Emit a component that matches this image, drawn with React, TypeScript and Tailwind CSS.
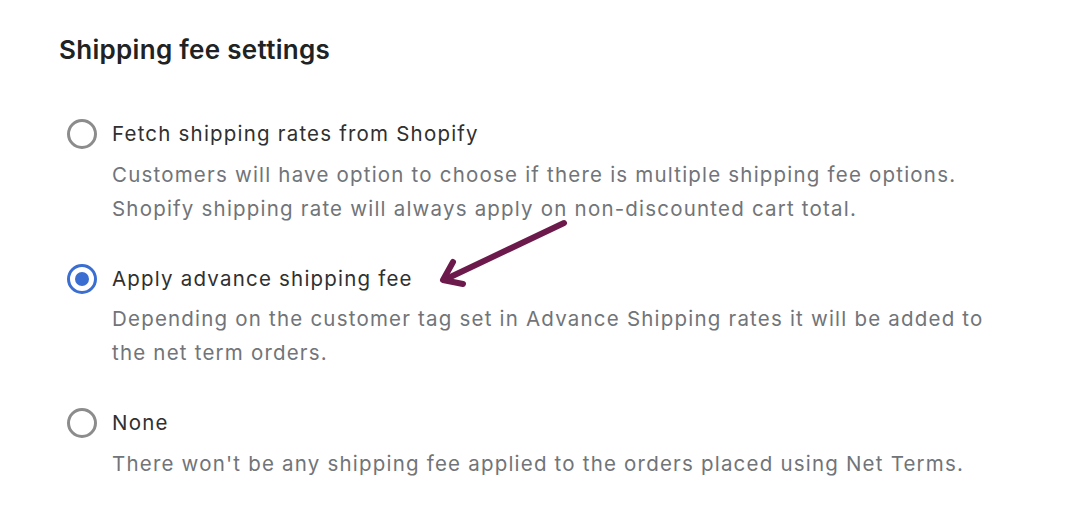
import React, { useState } from "react";

type Option = {
  id: string;
  label: string;
  lines: string[];
};

const options: Option[] = [
  {
    id: "shopify",
    label: "Fetch shipping rates from Shopify",
    lines: [
      "Customers will have option to choose if there is multiple shipping fee options.",
      "Shopify shipping rate will always apply on non-discounted cart total.",
    ],
  },
  {
    id: "advance",
    label: "Apply advance shipping fee",
    lines: [
      "Depending on the customer tag set in Advance Shipping rates it will be added to",
      "the net term orders.",
    ],
  },
  {
    id: "none",
    label: "None",
    lines: ["There won't be any shipping fee applied to the orders placed using Net Terms."],
  },
];

function Radio({ checked }: { checked: boolean }) {
  if (checked) {
    return (
      <span className="flex h-[30px] w-[30px] shrink-0 items-center justify-center rounded-full border-[3px] border-[#3a6fd1] bg-white">
        <span className="h-[14px] w-[14px] rounded-full bg-[#3a6fd1]" />
      </span>
    );
  }
  return <span className="h-[30px] w-[30px] shrink-0 rounded-full border-[3px] border-[#8c8c8c] bg-white" />;
}

export default function App() {
  const [selected, setSelected] = useState("advance");

  return (
    <div className="relative min-h-[514px] w-[1090px] bg-white font-['Inter',sans-serif]">
      <div className="px-[59px] pt-[34px]">
        <h2 className="text-[26px] font-semibold leading-[32px] tracking-[0.3px] text-[#202223]">
          Shipping fee settings
        </h2>

        <div className="mt-[53px] flex flex-col gap-[38px]">
          {options.map((opt) => (
            <label key={opt.id} className="flex cursor-pointer flex-col" onClick={() => setSelected(opt.id)}>
              <div className="ml-[8px] flex items-center gap-[15px]">
                <Radio checked={selected === opt.id} />
                <span className="text-[20.5px] leading-[30px] tracking-[1.2px] text-[#303030]">{opt.label}</span>
              </div>
              <div className="mt-[8.5px] pl-[53px] text-[20.5px] leading-[34px] tracking-[1.2px] text-[#717478]">
                {opt.lines.map((l) => (
                  <div key={l}>{l}</div>
                ))}
              </div>
            </label>
          ))}
        </div>
      </div>

      {/* annotation arrow */}
      <svg className="pointer-events-none absolute left-0 top-0" width="1090" height="514" viewBox="0 0 1090 514">
        <g stroke="#6c1a4c" strokeWidth="6" strokeLinecap="round" strokeLinejoin="round" fill="none">
          <path d="M564 223 L444 280" />
          <path d="M453 262 L443 280 L463 284" />
        </g>
      </svg>
    </div>
  );
}
